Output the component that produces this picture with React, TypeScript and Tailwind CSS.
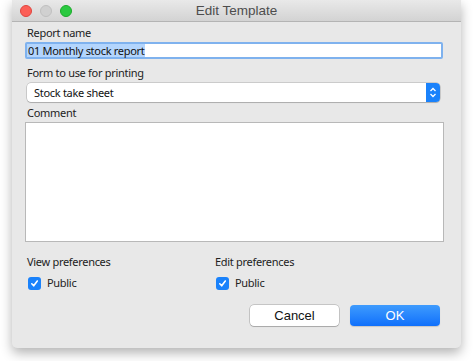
import React from "react"

const Check = () => (
  <span className="w-[13px] h-[13px] rounded-[3px] bg-[#1a82fb] flex items-center justify-center">
    <svg width="9" height="9" viewBox="0 0 9 9">
      <path d="M1.8 4.8 L3.7 6.8 L7.3 2" stroke="white" strokeWidth="1.6" fill="none" strokeLinecap="round" strokeLinejoin="round" />
    </svg>
  </span>
)

export default function App() {
  return (
    <div className="w-[473px] h-[361px] bg-white pl-[12px] pt-0" style={{ fontFamily: '"Noto Sans", sans-serif' }}>
      <div className="w-[449px] h-[348px] rounded-b-[5px] bg-[#e8e8e8] shadow-[0_5px_12px_rgba(0,0,0,0.3)] flex flex-col overflow-hidden">
        <div className="h-[22px] shrink-0 bg-gradient-to-b from-[#e9e9e9] to-[#d3d3d3] border-b border-[#b4b4b4] flex items-center relative">
          <div className="flex gap-[8px] pl-[8px]">
            <span className="w-[12px] h-[12px] rounded-full bg-[#fc5f57] border border-[#e0443e]" />
            <span className="w-[12px] h-[12px] rounded-full bg-[#d0d0d0] border border-[#c0c0c0]" />
            <span className="w-[12px] h-[12px] rounded-full bg-[#2ac940] border border-[#1aab29]" />
          </div>
          <div className="absolute inset-0 flex items-center justify-center text-[13.5px] text-[#4d4d4d] pt-[1px]" style={{ fontFamily: '"Liberation Sans", sans-serif' }}>
            Edit Template
          </div>
        </div>
        <div className="flex flex-col px-[13px] text-[11px] leading-[14px] tracking-[-0.3px] text-[#222]">
          <div className="pl-[2px] h-[14px] mt-[4px]">Report name</div>
          <div className="mt-[2px] h-[17px] w-[418px] bg-white border-[2px] border-[#7fb2ee] rounded-[2px] flex items-center text-[#111]">
            <span className="bg-[#b3d5fd] pl-[1px] pr-[1px] leading-[13px]">01 Monthly stock report</span>
          </div>
          <div className="pl-[2px] mt-[7px] h-[14px]">Form to use for printing</div>
          <div className="mt-[3px] ml-[2px] h-[19px] w-[413px] bg-white rounded-[4px] shadow-[0_0_0_0.5px_rgba(0,0,0,0.25),0_1px_1px_rgba(0,0,0,0.15)] flex items-center justify-between text-[#111]">
            <span className="pl-[7px]">Stock take sheet</span>
            <span className="w-[14px] h-[19px] bg-[#1a82fb] rounded-r-[4px] flex items-center justify-center">
              <svg width="8" height="11" viewBox="0 0 8 11">
                <path d="M1.5 4 L4 1.5 L6.5 4 M1.5 7 L4 9.5 L6.5 7" stroke="white" strokeWidth="1.3" fill="none" />
              </svg>
            </span>
          </div>
          <div className="pl-[2px] mt-[4px] h-[14px]">Comment</div>
          <div className="mt-[2px] h-[120px] w-[419px] bg-white border border-[#b8b8b8]" />
          <div className="flex mt-[13px] pl-[2px]">
            <div className="w-[188px] flex flex-col">
              <div className="h-[14px]">View preferences</div>
              <div className="flex items-center gap-[6px] mt-[7px] pl-[1px] h-[14px]">
                <Check />
                <span>Public</span>
              </div>
            </div>
            <div className="flex flex-col">
              <div className="h-[14px]">Edit preferences</div>
              <div className="flex items-center gap-[6px] mt-[7px] pl-[1px] h-[14px]">
                <Check />
                <span>Public</span>
              </div>
            </div>
          </div>
          <div className="flex justify-end gap-[11px] mt-[15px] pr-[8px] text-[13px] tracking-normal" style={{ fontFamily: '"Liberation Sans", sans-serif' }}>
            <button className="w-[89px] h-[21px] bg-white rounded-[4px] text-[#111] shadow-[0_0_0_0.5px_rgba(0,0,0,0.3),0_1px_1px_rgba(0,0,0,0.15)]">Cancel</button>
            <button className="w-[90px] h-[21px] rounded-[4px] text-white bg-gradient-to-b from-[#3e9bfd] to-[#0f6ffb] shadow-[0_1px_1px_rgba(0,0,0,0.15)]">OK</button>
          </div>
        </div>
      </div>
    </div>
  )
}
